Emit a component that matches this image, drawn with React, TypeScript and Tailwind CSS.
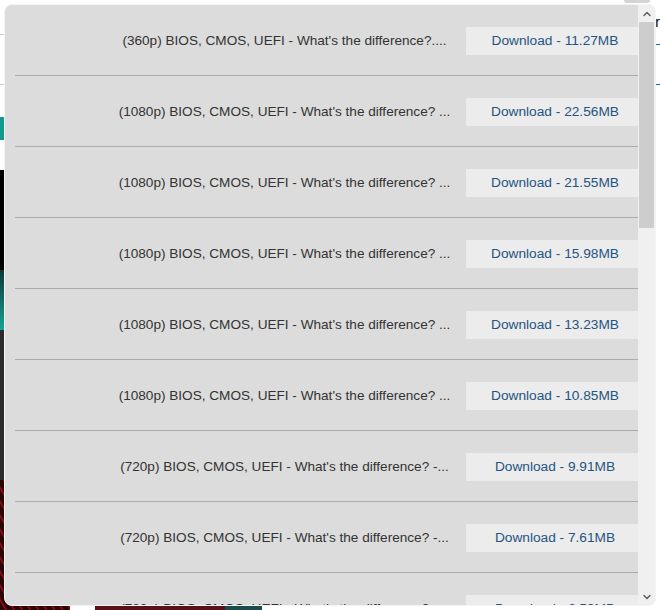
import { ChevronUp, ChevronDown } from "lucide-react";

const rows = [
  { title: "(360p) BIOS, CMOS, UEFI - What's the difference?....", size: "11.27MB" },
  { title: "(1080p) BIOS, CMOS, UEFI - What's the difference? ...", size: "22.56MB" },
  { title: "(1080p) BIOS, CMOS, UEFI - What's the difference? ...", size: "21.55MB" },
  { title: "(1080p) BIOS, CMOS, UEFI - What's the difference? ...", size: "15.98MB" },
  { title: "(1080p) BIOS, CMOS, UEFI - What's the difference? ...", size: "13.23MB" },
  { title: "(1080p) BIOS, CMOS, UEFI - What's the difference? ...", size: "10.85MB" },
  { title: "(720p) BIOS, CMOS, UEFI - What's the difference? -...", size: "9.91MB" },
  { title: "(720p) BIOS, CMOS, UEFI - What's the difference? -...", size: "7.61MB" },
  { title: "(720p) BIOS, CMOS, UEFI - What's the difference? -...", size: "6.53MB" },
];

const Row = ({ title, size }: { title: string; size: string }) => (
  <div className="ml-[10px] h-[71px] shrink-0 flex items-center pt-[2px] border-b border-[#ababab]">
    <div className="w-[95px] shrink-0" />
    <div className="flex-1 text-center whitespace-nowrap overflow-hidden text-[13.6px] text-[#333]">
      {title}
    </div>
    <a className="ml-[7px] w-[172px] h-[28px] shrink-0 flex items-center justify-center pl-[6px] bg-[#ececec] text-[13.7px] text-[#245482] cursor-pointer">
      Download - {size}
    </a>
  </div>
);

const App = () => {
  return (
    <div
      className="relative w-[660px] h-[610px] overflow-hidden bg-white"
      style={{ fontFamily: "Tahoma, 'Liberation Sans', Arial, sans-serif" }}
    >
      {/* page behind the popup */}
      <div className="flex h-full">
        <div className="w-[70px] flex flex-col shrink-0">
          <div className="h-[35px] border-b border-[#ccc]" />
          <div className="h-[50px] border-b border-[#ccc]" />
          <div className="h-[32px]" />
          <div className="h-[23px] bg-[#119b8c]" />
          <div className="h-[30px]" />
          <div className="h-[100px] bg-black" />
          <div className="h-[60px] bg-gradient-to-b from-[#0a3a36] to-[#14a596]" />
          <div className="h-[150px] bg-[#2b2b2b]" />
          <div className="flex-1 bg-[#2a0508] bg-[repeating-linear-gradient(60deg,#2a0508_0px,#2a0508_4px,#9b0d16_5px,#2a0508_7px)]" />
        </div>
        <div className="flex-1 flex flex-col">
          <div className="h-[4px] flex justify-end pr-[10px]">
            <div className="w-[26px] h-[3px] bg-[#d4d4d4] rounded-b" />
          </div>
          <div className="h-[41px] flex items-start justify-end text-[14px] text-black leading-[36px] border-b border-[#1e6ab0]">
            Year
          </div>
          <div className="h-[40px] border-b border-[#1e6ab0]" />
          <div className="flex-1" />
          <div className="h-[8px] flex">
            <div className="w-[25px]" />
            <div className="w-[130px] bg-[#5a1018]" />
            <div className="w-[37px] bg-[#1d4a4a]" />
          </div>
        </div>
      </div>

      {/* popup */}
      <div className="absolute left-[4px] top-[4px] w-[652px] h-[602px] flex rounded-[8px] border border-[#f4f4f4] bg-[#dcdcdc] overflow-hidden">
        <div className="flex-1 flex flex-col overflow-hidden">
          {rows.map((r, i) => (
            <Row key={i} title={r.title} size={r.size} />
          ))}
        </div>
        <div className="w-[17px] shrink-0 flex flex-col bg-[#f0f0f0]">
          <div className="h-[17px] flex items-center justify-center text-[#606060]">
            <ChevronUp size={12} strokeWidth={3} />
          </div>
          <div className="flex-1 flex flex-col">
            <div className="mx-[1px] h-[206px] bg-[#cdcdcd]" />
          </div>
          <div className="h-[17px] flex items-center justify-center text-[#606060]">
            <ChevronDown size={12} strokeWidth={3} />
          </div>
        </div>
      </div>
    </div>
  );
};

export default App;
